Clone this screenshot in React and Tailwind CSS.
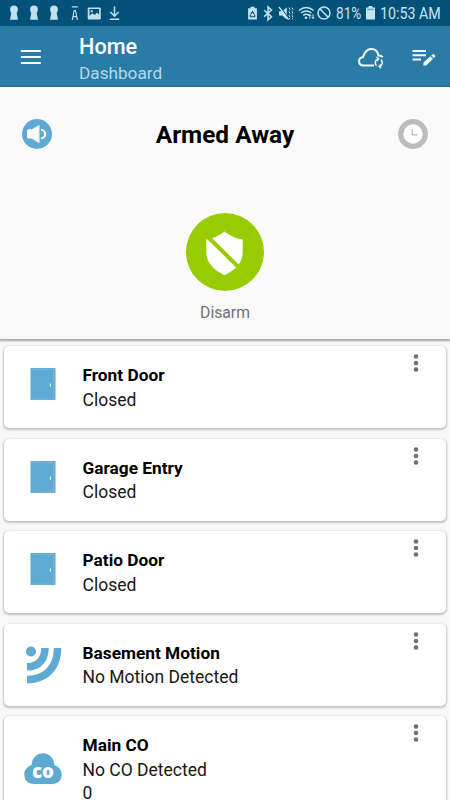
import React from "react";

function NotificationIcons() {
  return (
    <svg width="130" height="26" viewBox="0 0 130 26" fill="#bfe0ee">
      {[14, 34, 54].map((x) => (
        <g key={x}>
          <circle cx={x} cy="9.5" r="3.9" />
          <path d={`M${x - 2.4} 11h4.8l1.6 8.8h-8z`} />
        </g>
      ))}
      <path d="M71.8 6.2h6v1.3h-6z" />
      <path d="M72.2 20l2-9.5h1.2l2 9.5M73 16.6h3.6" fill="none" stroke="#bfe0ee" strokeWidth="1.2" />
      <path
        fillRule="evenodd"
        d="M89 7.5h10.5q1.3 0 1.3 1.3v9.4q0 1.3-1.3 1.3H89q-1.3 0-1.3-1.3V8.8q0-1.3 1.3-1.3zm.5 1.6v6.7l3-2.6 2.3 1.8 2.1-2.5 2.2 2V9.1zm1.2 1.2h2v2h-2z"
      />
      <path d="M114.5 6.5v9.5M110.3 12l4.2 4.2 4.2-4.2M109.8 19.2h9.4" fill="none" stroke="#bfe0ee" strokeWidth="1.5" />
    </svg>
  );
}

function SystemIcons() {
  return (
    <svg width="94" height="26" viewBox="240 0 94 26" fill="none" stroke="#c5e4f1" strokeWidth="1.4">
      <path d="M250.5 6.8h4v1.4h2.4v11.4h-8.8V8.2h2.4z" fill="#c5e4f1" stroke="none" />
      <path d="M250.7 14.2l1.8-2.8 1.8 2.8M250 16.8h5M249.800 16.6l.9-1.8M255.2 16.6l-.9-1.8" stroke="#035078" strokeWidth="1.1" />
      <path d="M264.2 10.2l7.3 6.6-3.5 3V7l3.500 3-7.3 6.6" strokeWidth="1.5" />
      <path d="M279 11.2h3.2l4.6-3.8v12l-4.6-3.8H279z" fill="#c5e4f1" stroke="none" />
      <path d="M280.500 7l9 12.500" stroke="#035078" strokeWidth="1.2" />
      <path d="M279 7l9.500 12.500" strokeWidth="1.3" />
      <path d="M289 7.500l1 2-1 2 1 2-1 2 1 2-1 2M292 7.500l1 2-1 2 1 2-1 2 1 2-1 2" strokeWidth="1" strokeDasharray="3 1" />
      <path d="M298.8 10.5q7.4-6 14.8 0M301 13q5.2-4.1 10.4 0M303.2 15.4q3-2.3 6 0" strokeWidth="1.5" />
      <circle cx="306" cy="17.7" r="1.3" fill="#c5e4f1" stroke="none" />
      <path d="M309.8 18.7v-4M308.5 16l1.3-1.5 1.3 1.5M313 14.2v4.3M311.7 17l1.3 1.5 1.3-1.5" strokeWidth="1" />
      <circle cx="324" cy="13" r="6" strokeWidth="1.5" />
      <path d="M319.8 8.8l8.4 8.4" strokeWidth="1.5" />
    </svg>
  );
}

function StatusBar() {
  return (
    <div className="flex h-[26px] items-center bg-[#035078] text-[#c5e4f1]">
      <NotificationIcons />
      <div className="ml-[110px] flex items-center">
        <SystemIcons />
        <span className="ml-[2px] w-[27px] origin-left scale-x-[0.85] pt-[2px] text-[16px] leading-6 whitespace-nowrap">81%</span>
        <svg className="ml-[3px]" width="9" height="26" viewBox="0 0 9 26">
          <path d="M2.5 6h4v1.6H9v12H0v-12h2.5z" fill="#c5e4f1" />
          <path d="M1.3 8.7h6.4v1.5H1.3z" fill="#6d9fb7" />
        </svg>
        <span className="ml-[5px] origin-left scale-x-[0.89] pt-[2px] text-[16px] leading-6 whitespace-nowrap">10:53 AM</span>
      </div>
    </div>
  );
}

function AppBar() {
  return (
    <header className="flex h-[61px] bg-[#2a7ba5] text-white">
      <svg className="mt-[22px] ml-[20px]" width="22" height="18" viewBox="0 0 22 18" stroke="#f1fbff" strokeWidth="2">
        <path d="M.8 3h20M.8 9h20M.8 15h20" />
      </svg>
      <div className="ml-[37px] w-[277px] pt-[8px]">
        <h1 className="text-[21.7px] leading-[26px] font-medium">Home</h1>
        <p className="text-[17.2px] leading-[26px] text-[#b4daef]">Dashboard</p>
      </div>
      <svg className="mt-[20px]" width="30" height="26" viewBox="356 46 30 26" fill="none" stroke="#effaff" strokeWidth="2">
        <path d="M374 65.500h-10.500c-5.500 0-6.100-7.600-.6-8.200 1.800-5.800 4.600-8.300 8.300-8.300 4.300 0 6.600 2.800 7.200 6.400 2.100 0 3.700.8 4.300 1.800" />
        <path d="M378 58.900c-3 .8-3.600 4.700-1.500 6.700M379.500 66.500c3.200-.9 3.700-5 1.500-7" strokeWidth="1.5" />
        <path d="M376.400 57l2.400 1.800-1.900 2.300M381.200 64.300l-2.400 2.200 2.400 1.800" strokeWidth="1.200" />
      </svg>
      <svg className="mt-[20px] ml-[24px]" width="28" height="26" viewBox="410 46 28 26" fill="#effaff">
        <path d="M412.500 50h13.500v2h-13.500zM412.500 54.200h13.500v2h-13.500zM412.500 58.400h8.500v2h-8.500zM423.300 65.500l.3-2.900 6.800-6.400 2.600 2.600-6.800 6.700zM431.300 55.400l1.100-1q.9-.7 1.700.1l.8.8q.8.9 0 1.600l-1.100 1z" />
      </svg>
    </header>
  );
}

function ArmingPanel() {
  return (
    <section className="relative z-10 h-[252px] bg-[#fafafa] px-[22px] pt-[30px] shadow-[0_1px_2px_1px_rgba(0,0,0,0.34)]">
      <div className="flex h-9 items-start justify-between">
        <svg className="mt-px" width="30" height="32" viewBox="0 0 30 32">
          <circle cx="15" cy="16" r="15" fill="#5faad3" />
          <path d="M6.500 11.300q-1.500 0-1.500 1.500v6.300q0 1.500 1.500 1.500h3.300l6.200 4V7.700l-6.200 3.600z" fill="white" />
          <path d="M16.800 7.300v17.500" stroke="white" strokeWidth="1.300" />
          <path d="M19 11.600q4.200.9 4.200 4.500t-4.200 4.500" stroke="white" strokeWidth="1.900" fill="none" />
        </svg>
        <h2 className="mt-[2px] text-[24.4px] leading-8 font-bold">Armed Away</h2>
        <svg className="mt-px" width="30" height="32" viewBox="0 0 30 32">
          <circle cx="15" cy="16" r="12.3" fill="white" stroke="#bcbcbc" strokeWidth="5.2" />
          <path d="M14.2 11.300v5.500h5.3" fill="none" stroke="#b8b8b8" strokeWidth="1.3" />
        </svg>
      </div>
      <div className="flex flex-col items-center pt-[60px]">
        <svg width="78" height="78" viewBox="0 0 78 78">
          <circle cx="39" cy="39" r="39" fill="#99cc00" />
          <path d="M38.500 18.500q8 6.400 18.200 8v12.500c0 9.500-5.700 17.500-18.200 23.200C26 56.500 20.300 48.500 20.300 39V26.500q10.200-1.600 18.200-8z" fill="white" />
          <path d="M20.500 22.500L56 57.500" stroke="#99cc00" strokeWidth="4" />
        </svg>
        <p className="pt-[10px] text-[15.7px] leading-6 text-[#717171]">Disarm</p>
      </div>
    </section>
  );
}

function DoorIcon() {
  return (
    <svg className="mt-[21px] ml-[26px]" width="26" height="34" viewBox="0 0 26 34">
      <rect x="0.5" y="1" width="25" height="32" rx="0.8" fill="#5faad3" />
      <path d="M2 2.500h21.700v29.500H2" fill="none" stroke="#8ac2e0" strokeWidth="0.700" strokeDasharray="2 1" />
      <path d="M20.300 16.500v3.300" stroke="#e2f4fc" strokeWidth="1.2" />
    </svg>
  );
}

function MotionIcon() {
  return (
    <svg className="mt-[21px] ml-[21px]" width="38" height="40" viewBox="0 0 38 40" fill="#5faad3">
      <circle cx="6" cy="6.500" r="5" />
      <path d="M16.200 3H23.700C23.700 17 15.500 25.600 2 25.600V18C11 18 16.200 12.500 16.200 3z" />
      <path d="M28.800 3H36.300C36.300 24 23.500 38.300 2 38.300V30.700C19 30.700 28.800 20 28.800 3z" />
    </svg>
  );
}

function CoIcon() {
  return (
    <svg className="mt-[36px] ml-[20px]" width="38" height="34" viewBox="0 0 38 34">
      <path d="M10 32C3.500 32 .3 27.500 .3 22.500C.3 18 3.300 14.600 7.500 13.300C8.200 6 12.500 1.300 19 1.300S29.800 6 30.500 13.300C34.700 14.600 37.700 18 37.700 22.500C37.700 27.500 34.500 32 28 32z" fill="#5faad3" />
      <text x="19" y="25.600" textAnchor="middle" fill="white" fontFamily="Open Sans, sans-serif" fontSize="19" fontWeight="800" textLength="22" lengthAdjust="spacingAndGlyphs">co</text>
    </svg>
  );
}

const sensors = [
  { name: "Front Door", lines: ["Closed"], icon: DoorIcon },
  { name: "Garage Entry", lines: ["Closed"], icon: DoorIcon },
  { name: "Patio Door", lines: ["Closed"], icon: DoorIcon },
  { name: "Basement Motion", lines: ["No Motion Detected"], icon: MotionIcon },
  { name: "Main CO", lines: ["No CO Detected", "0"], icon: CoIcon, tall: true },
];

function SensorCard({ name, lines, icon: Icon, tall }) {
  return (
    <article className={`${tall ? "h-[106px]" : "h-[82px]"} flex shrink-0 rounded-[5px] bg-white shadow-[0_1px_2px_1px_rgba(0,0,0,0.21)]`}>
      <div className="w-[78.5px] shrink-0"><Icon /></div>
      <div className="flex-1 pt-[17px]">
        <h3 className="text-[17.3px] leading-[25.5px] font-bold">{name}</h3>
        {lines.map((line) => <p key={line} className="text-[17.5px] leading-[23px] text-[#171717]">{line}</p>)}
      </div>
      <svg className="mt-[6px] mr-[25.5px]" width="10" height="24" viewBox="0 0 10 24" fill="#717171">
        <circle cx="5" cy="4.5" r="2.3" /><circle cx="5" cy="11" r="2.3" /><circle cx="5" cy="17.5" r="2.3" />
      </svg>
    </article>
  );
}

export default function App() {
  return (
    <div className="flex h-[800px] w-[450px] flex-col overflow-hidden bg-[#f8f8f8] font-['Roboto',sans-serif] text-black">
      <StatusBar />
      <AppBar />
      <ArmingPanel />
      <main className="flex min-h-0 flex-1 flex-col gap-[10.5px] px-[4px] pt-[7px]">
        {sensors.map((sensor) => <SensorCard key={sensor.name} {...sensor} />)}
      </main>
    </div>
  );
}
